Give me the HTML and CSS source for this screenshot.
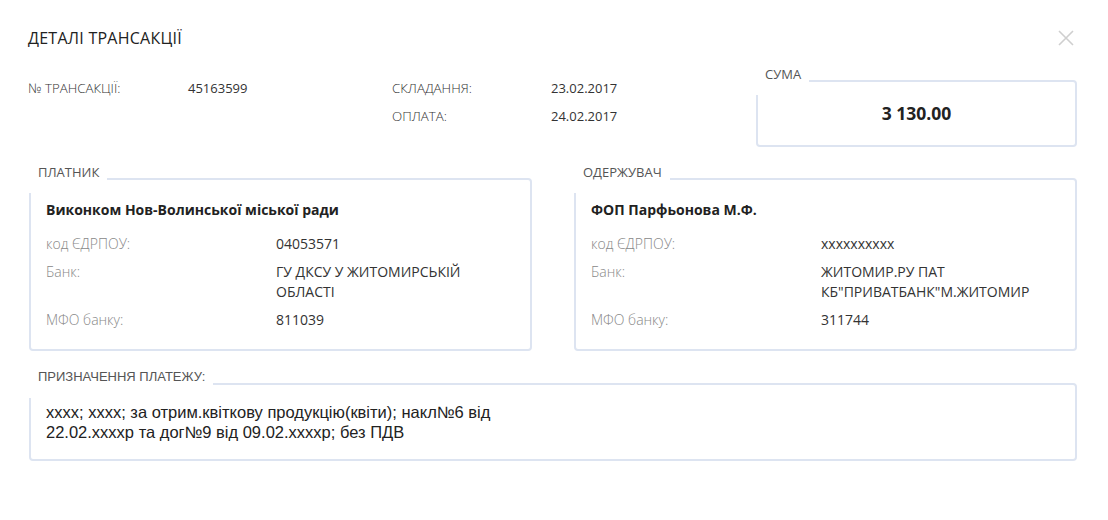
FILE: index.html
```html
<!DOCTYPE html>
<html lang="uk">
<head>
<meta charset="utf-8">
<title>Деталі трансакції</title>
<link rel="stylesheet" href="styles.css">
</head>
<body>
<div class="modal">
  <header class="modal-head">
    <h1 class="modal-title">ДЕТАЛІ ТРАНСАКЦІЇ</h1>
    <button class="close" aria-label="Закрити">
      <svg width="16" height="16" viewBox="0 0 16 16"><path d="M1 1 L15 15 M15 1 L1 15" stroke="#cfcfcf" stroke-width="1.6" fill="none"/></svg>
    </button>
  </header>

  <section class="top">
    <div class="meta">
      <span class="meta-label">№ ТРАНСАКЦІЇ:</span>
      <span class="meta-value">45163599</span>
      <span class="meta-label">СКЛАДАННЯ:</span>
      <span class="meta-value">23.02.2017</span>
      <span></span>
      <span></span>
      <span class="meta-label">ОПЛАТА:</span>
      <span class="meta-value">24.02.2017</span>
    </div>
    <fieldset class="box sum">
      <legend class="legend">СУМА</legend>
      <div class="amount">3 130.00</div>
    </fieldset>
  </section>

  <section class="parties">
    <fieldset class="box">
      <legend class="legend">ПЛАТНИК</legend>
      <div class="party">
        <div class="party-name">Виконком Нов-Волинської міської ради</div>
        <dl class="rows">
          <dt>код ЄДРПОУ:</dt><dd>04053571</dd>
          <dt>Банк:</dt><dd>ГУ ДКСУ У ЖИТОМИРСЬКІЙ ОБЛАСТІ</dd>
          <dt>МФО банку:</dt><dd>811039</dd>
        </dl>
      </div>
    </fieldset>
    <fieldset class="box">
      <legend class="legend">ОДЕРЖУВАЧ</legend>
      <div class="party">
        <div class="party-name">ФОП Парфьонова М.Ф.</div>
        <dl class="rows">
          <dt>код ЄДРПОУ:</dt><dd>xxxxxxxxxx</dd>
          <dt>Банк:</dt><dd>ЖИТОМИР.РУ ПАТ КБ"ПРИВАТБАНК"М.ЖИТОМИР</dd>
          <dt>МФО банку:</dt><dd>311744</dd>
        </dl>
      </div>
    </fieldset>
  </section>

  <fieldset class="box purpose">
    <legend class="legend legend-arial">ПРИЗНАЧЕННЯ ПЛАТЕЖУ:</legend>
    <div class="purpose-body">
      <p class="purpose-text">xxxx; xxxx; за отрим.квіткову продукцію(квіти); накл№6 від 22.02.xxxxр та дог№9 від 09.02.xxxxр; без ПДВ</p>
    </div>
  </fieldset>
</div>
</body>
</html>
```

FILE: styles.css
```css
* { box-sizing: border-box; }

body {
  margin: 0;
  background: #fff;
  font-family: "Open Sans", "Liberation Sans", sans-serif;
  color: #333;
}

.modal {
  padding: 28px 31px 0 29px;
}

.modal-head {
  display: flex;
  justify-content: space-between;
  align-items: center;
  height: 20px;
}

.modal-title {
  margin: 0 0 0 -1px;
  font-size: 16px;
  font-weight: 400;
  letter-spacing: 0.25px;
  line-height: 20px;
  color: #222;
}

.close {
  border: 0;
  background: none;
  padding: 0;
  margin-right: 3px;
  width: 16px;
  height: 16px;
  display: flex;
  cursor: pointer;
}

.top {
  display: flex;
  justify-content: space-between;
  margin-top: 19px;
}

.meta {
  display: grid;
  grid-template-columns: 160px 204px 159px auto;
  row-gap: 8px;
  padding-top: 11px;
  margin-left: -1px;
  align-content: start;
  line-height: 20px;
}

.meta-label {
  font-size: 13.3px;
  font-weight: 300;
  color: #333;
}

.meta-value {
  font-size: 13px;
  color: #333;
}

.box {
  margin: 0;
  padding: 0;
  border: 2px solid #dde4f1;
  border-radius: 4px;
  min-width: 0;
}

.legend {
  margin-left: -2px;
  padding: 0 8px 14px 9px;
  font-size: 13px;
  line-height: 14px;
  color: #555;
}

.legend-arial {
  font-family: "Liberation Sans", Arial, sans-serif;
}

.sum {
  width: 321px;
}

.amount {
  padding: 7px 0 21px;
  text-align: center;
  font-size: 17.5px;
  font-weight: 700;
  line-height: 22px;
  color: #222;
}

.parties {
  display: grid;
  grid-template-columns: 1fr 1fr;
  column-gap: 42px;
  margin-top: 18px;
}

.party {
  padding: 7px 15px 19px;
}

.party-name {
  font-size: 14px;
  font-weight: 700;
  line-height: 20px;
  color: #222;
}

.rows {
  display: grid;
  grid-template-columns: 230px 1fr;
  row-gap: 8px;
  margin: 14px 0 0;
  font-size: 14px;
  line-height: 20px;
}

.rows dt {
  font-weight: 300;
  color: #888;
}

.rows dd {
  margin: 0;
  color: #333;
}

.purpose {
  margin-top: 19px;
}

.purpose-body {
  padding: 4px 15px 17px;
}

.purpose-text {
  margin: 0;
  max-width: 480px;
  font-family: "Liberation Sans", Arial, sans-serif;
  font-size: 16.5px;
  line-height: 20px;
  color: #222;
}
```
